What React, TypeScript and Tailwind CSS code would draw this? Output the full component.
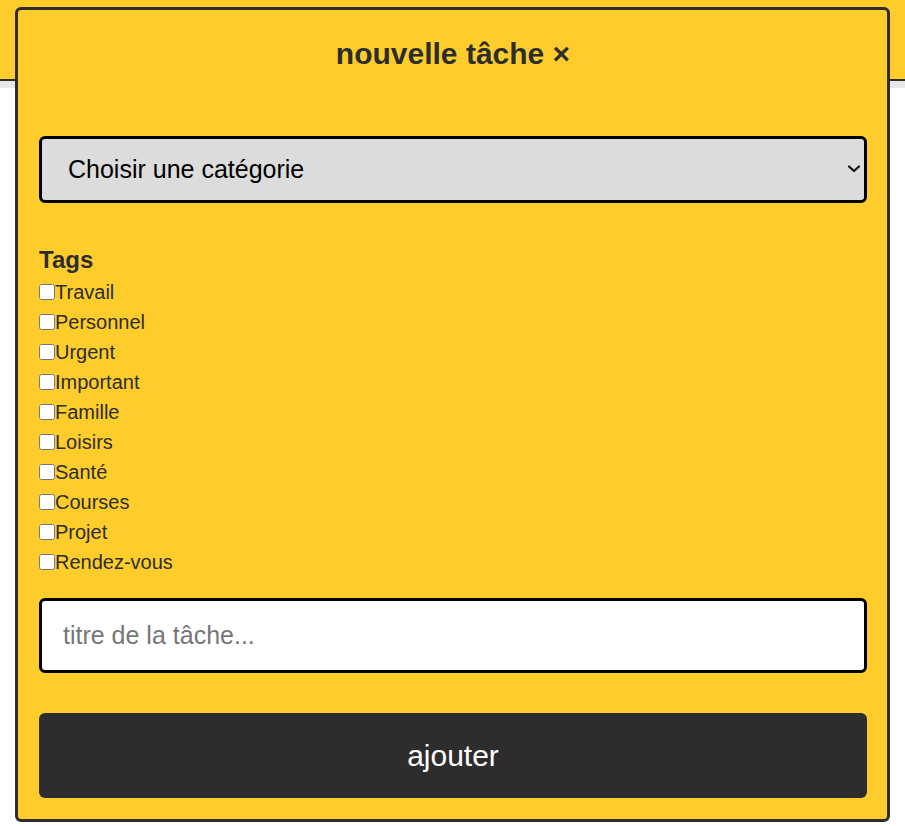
import React, { useState } from 'react';

const tags = ['Travail', 'Personnel', 'Urgent', 'Important', 'Famille', 'Loisirs', 'Santé', 'Courses', 'Projet', 'Rendez-vous'];

const App: React.FC = () => {
  const [checked, setChecked] = useState<string[]>([]);
  const [title, setTitle] = useState('');

  const toggle = (tag: string) =>
    setChecked((prev) => (prev.includes(tag) ? prev.filter((t) => t !== tag) : [...prev, tag]));

  return (
    <div className="relative min-h-[826px] bg-white font-['Liberation_Sans',Arial,sans-serif] text-[#2d2d2d]">
      <header className="h-[81px] bg-[#ffcd2b] border-b-[2px] border-[#2d2d2d]" />
      <div className="h-[7px] bg-[#e8e8e8]" />

      <div className="absolute left-[15px] top-[7px] w-[875px] bg-[#ffcd2b] border-[3px] border-[#2d2d2d] rounded-[6px] pt-[23px] pb-[21px] pl-[21px] pr-[20px]">
        <h2 className="text-center text-[30px] font-bold leading-[42px]">nouvelle tâche ×</h2>

        <div className="relative mt-[61px]">
          <select className="appearance-none w-full h-[67px] bg-[#dcdcdc] border-[3px] border-black rounded-[6px] pl-[26px] pr-[30px] text-[25px] text-black">
            <option>Choisir une catégorie</option>
          </select>
          <svg
            className="pointer-events-none absolute right-[6px] top-[28px]"
            width="14"
            height="10"
            viewBox="0 0 14 10"
            fill="none"
          >
            <path d="M2 2.5 L7 7 L12 2.5" stroke="#111" strokeWidth="2.2" strokeLinecap="round" strokeLinejoin="round" />
          </svg>
        </div>

        <div className="mt-[42px]">
          <h3 className="text-[24px] font-bold leading-[30px]">Tags</h3>
          <div className="mt-[2px] flex flex-col">
            {tags.map((tag) => (
              <label key={tag} className="flex items-center h-[30px] text-[20px]">
                <input
                  type="checkbox"
                  checked={checked.includes(tag)}
                  onChange={() => toggle(tag)}
                  className="m-0 w-4 h-4"
                />
                <span>{tag}</span>
              </label>
            ))}
          </div>
        </div>

        <input
          value={title}
          onChange={(e) => setTitle(e.target.value)}
          placeholder="titre de la tâche..."
          className="mt-[21px] w-full h-[75px] bg-white border-[3px] border-black rounded-[6px] px-[21px] text-[25px] placeholder:text-[#767676] outline-none"
        />

        <button className="mt-[40px] w-full h-[85px] bg-[#2d2d2d] text-white rounded-[6px] text-[30px]">
          ajouter
        </button>
      </div>
    </div>
  );
};

export default App;
